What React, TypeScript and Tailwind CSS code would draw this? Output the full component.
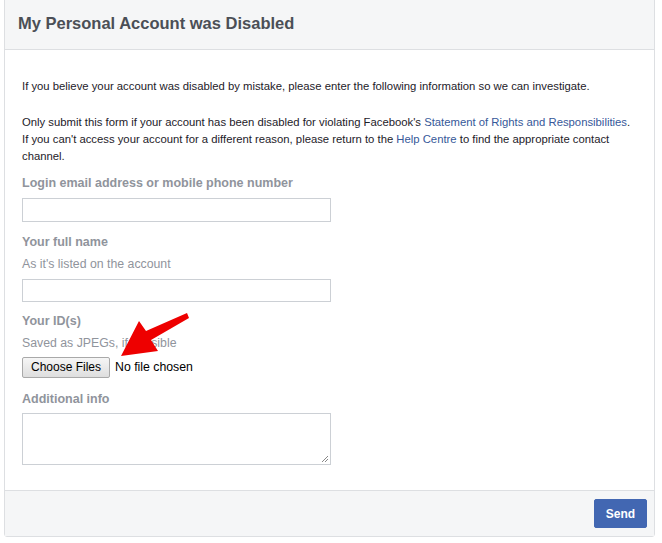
import React from "react";

export default function App() {
  return (
    <div className="w-[662px] h-[543px] bg-white relative" style={{ fontFamily: '"Liberation Sans", Arial, sans-serif' }}>
      <div className="absolute left-0 top-0 w-[662px]">
        <div className="ml-[4px] w-[651px] mt-[-2px] border border-[#dddfe2] rounded-b-[3px] bg-white">
          <div className="h-[51px] bg-[#f5f6f7] border-b border-[#dddfe2] pl-[13px] pt-[14px]">
            <h1 className="text-[16.5px] font-bold text-[#4b4f56] leading-[20px]">My Personal Account was Disabled</h1>
          </div>
          <div className="pl-[17px] pr-[10px] pt-[28px] pb-[25px] text-[11.3px] leading-[17px] text-[#1d2129]">
            <p className="whitespace-nowrap">If you believe your account was disabled by mistake, please enter the following information so we can investigate.</p>
            <p className="mt-[19px] whitespace-nowrap">
              Only submit this form if your account has been disabled for violating Facebook's <span className="text-[#365899]">Statement of Rights and Responsibilities</span>.
              <br />
              If you can't access your account for a different reason, please return to the <span className="text-[#365899]">Help Centre</span> to find the appropriate contact
              <br />
              channel.
            </p>
            <div className="mt-[9px] text-[12.5px] font-bold text-[#90949c] leading-[18px]">Login email address or mobile phone number</div>
            <div className="mt-[6px] w-[309px] h-[24px] border border-[#ccd0d5]" />
            <div className="mt-[11px] text-[12.5px] font-bold text-[#90949c] leading-[18px]">Your full name</div>
            <div className="mt-[5px] text-[12.3px] text-[#90949c] leading-[17px]">As it's listed on the account</div>
            <div className="mt-[6px] w-[309px] h-[23px] border border-[#ccd0d5]" />
            <div className="mt-[10px] text-[12.5px] font-bold text-[#90949c] leading-[18px]">Your ID(s)</div>
            <div className="mt-[5px] text-[12.3px] text-[#90949c] leading-[17px]">Saved as JPEGs, if possible</div>
            <div className="mt-[5px] flex items-center gap-[5px]">
              <div className="w-[88px] h-[21px] border border-[#a9a9a9] rounded-[2px] bg-gradient-to-b from-[#f6f6f6] to-[#dedede] text-[12px] text-black flex items-center justify-center">Choose Files</div>
              <span className="text-[12.3px] text-black">No file chosen</span>
            </div>
            <div className="mt-[12px] text-[12.5px] font-bold text-[#90949c] leading-[18px]">Additional info</div>
            <div className="mt-[5px] w-[309px] h-[52px] border border-[#ccd0d5] relative">
              <svg className="absolute right-[1px] bottom-[1px]" width="8" height="8" viewBox="0 0 8 8">
                <path d="M7 1 L1 7 M7 4 L4 7" stroke="#888" strokeWidth="1" />
              </svg>
            </div>
          </div>
          <div className="h-[46px] bg-[#f5f6f7] border-t border-[#dddfe2] flex items-center justify-end pr-[7px]">
            <div className="w-[53px] h-[29px] bg-[#4267b2] rounded-[2px] border border-[#4267b2] text-white text-[12px] font-bold flex items-center justify-center">Send</div>
          </div>
        </div>
      </div>
      <svg className="absolute left-0 top-0 pointer-events-none" width="662" height="543">
        <polygon points="121,356 139,321 146,331 187,313 189,318 151,340 158,351" fill="#ee0000" />
      </svg>
    </div>
  );
}
